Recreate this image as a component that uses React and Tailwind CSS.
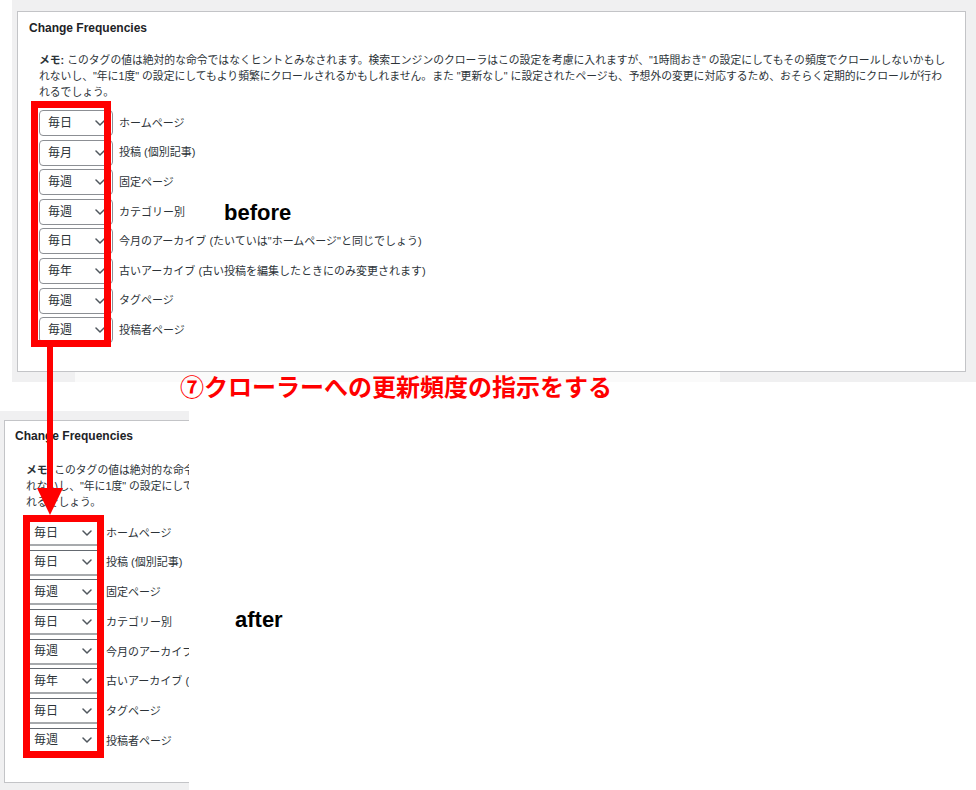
import React from "react";

const rowsTop = [
  ["毎日", "ホームページ"],
  ["毎月", "投稿 (個別記事)"],
  ["毎週", "固定ページ"],
  ["毎週", "カテゴリー別"],
  ["毎日", "今月のアーカイブ (たいていは\"ホームページ\"と同じでしょう)"],
  ["毎年", "古いアーカイブ (古い投稿を編集したときにのみ変更されます)"],
  ["毎週", "タグページ"],
  ["毎週", "投稿者ページ"],
];

const rowsBottom = [
  ["毎日", "ホームページ"],
  ["毎日", "投稿 (個別記事)"],
  ["毎週", "固定ページ"],
  ["毎日", "カテゴリー別"],
  ["毎週", "今月のアーカイブ (たいていは\"ホームページ\"と同じでしょう)"],
  ["毎年", "古いアーカイブ (古い投稿を編集したときにのみ変更されます)"],
  ["毎日", "タグページ"],
  ["毎週", "投稿者ページ"],
];

function Chevron() {
  return (
    <svg width="10" height="6" viewBox="0 0 10 6" className="shrink-0">
      <polyline points="1,1 5,5 9,1" fill="none" stroke="#50575e" strokeWidth="1.5" strokeLinecap="round" strokeLinejoin="round" />
    </svg>
  );
}

function Memo() {
  return (
    <div className="text-[10.8px] leading-[16px] text-[#2c3338] whitespace-nowrap">
      <div><span className="font-bold">メモ:</span> このタグの値は絶対的な命令ではなくヒントとみなされます。検索エンジンのクローラはこの設定を考慮に入れますが、"1時間おき" の設定にしてもその頻度でクロールしないかもし</div>
      <div>れないし、"年に1度" の設定にしてもより頻繁にクロールされるかもしれません。また "更新なし" に設定されたページも、予想外の変更に対応するため、おそらく定期的にクロールが行わ</div>
      <div>れるでしょう。</div>
    </div>
  );
}

const font = "font-['Liberation_Sans','Noto_Sans_CJK_JP',sans-serif]";

export default function App() {
  return (
    <div className={`relative w-[976px] h-[790px] bg-white overflow-hidden ${font}`}>
      {/* Top screenshot */}
      <div className="ml-[12px] bg-[#f0f0f1] pt-[11px] pl-[5px] pr-[10px] pb-[10px]">
        <div className="h-[361px] bg-white border border-[#c3c4c7] pl-[11px] pt-[8px] overflow-hidden">
          <div className="text-[12px] leading-[16px] font-bold text-[#1d2327]">Change Frequencies</div>
          <div className="mt-[16px] pl-[10px]">
            <Memo />
            <div className="mt-[10px] flex flex-col gap-[3.6px]">
              {rowsTop.map(([v, l], i) => (
                <div key={i} className="flex items-center h-[26px]">
                  <div className="shrink-0 w-[74px] h-[26px] border border-[#8c8f94] rounded-[4px] bg-white flex items-center justify-between pl-[8px] pr-[7px] text-[12px] text-[#2c3338]">
                    <span>{v}</span>
                    <Chevron />
                  </div>
                  <span className="ml-[6px] text-[11px] text-[#2c3338] whitespace-nowrap">{l}</span>
                </div>
              ))}
            </div>
          </div>
        </div>
      </div>

      <div className="h-[29px]" />

      {/* Bottom screenshot */}
      <div className="w-[189px] bg-[#f0f0f1] pt-[9px] pl-[4px] pb-[7px] overflow-hidden">
        <div className="h-[363px] w-[900px] bg-white border border-[#c3c4c7] pl-[10px] pt-[7px]">
          <div className="text-[12px] leading-[16px] font-bold text-[#1d2327]">Change Frequencies</div>
          <div className="mt-[18px] pl-[11px]">
            <Memo />
          </div>
          <div className="mt-[10px] pl-[14px] flex flex-col gap-[3.7px]">
            {rowsBottom.map(([v, l], i) => (
              <div key={i} className="flex items-center h-[26px]">
                <div className="shrink-0 w-[69px] h-[26px] border-t border-[#646970] border-b-2 border-b-[#a7aaad] bg-white flex items-center justify-between pl-[5px] pr-[6px] text-[12px] text-[#2c3338]">
                  <span>{v}</span>
                  <Chevron />
                </div>
                <span className="ml-[8px] text-[11px] text-[#2c3338] whitespace-nowrap">{l}</span>
              </div>
            ))}
          </div>
        </div>
      </div>

      {/* Overlays */}
      <div className="absolute left-[75px] top-[372px] w-[645px] h-[10px] bg-[#fafafa]" />
      <div className="absolute left-[180px] top-[372px] text-[24px] leading-[28px] font-bold text-[#ff0000] whitespace-nowrap font-['Noto_Sans_CJK_JP',sans-serif]">
        ⑦クローラーへの更新頻度の指示をする
      </div>

      <div className="absolute left-[224px] top-[202px] text-[22px] leading-none font-bold text-black">before</div>
      <div className="absolute left-[235px] top-[609px] text-[22px] leading-none font-bold text-black">after</div>

      <div className="absolute left-[31px] top-[101px] w-[80px] h-[246px] border-[7px] border-[#ff0000]" />
      <div className="absolute left-[23px] top-[515px] w-[81px] h-[243px] border-[7px] border-[#ff0000]" />

      <svg className="absolute left-[36px] top-[347px]" width="28" height="169" viewBox="0 0 28 169">
        <rect x="11" y="0" width="6" height="143" fill="#ff0000" />
        <polygon points="1,141 27,141 14,168" fill="#ff0000" />
      </svg>
    </div>
  );
}
